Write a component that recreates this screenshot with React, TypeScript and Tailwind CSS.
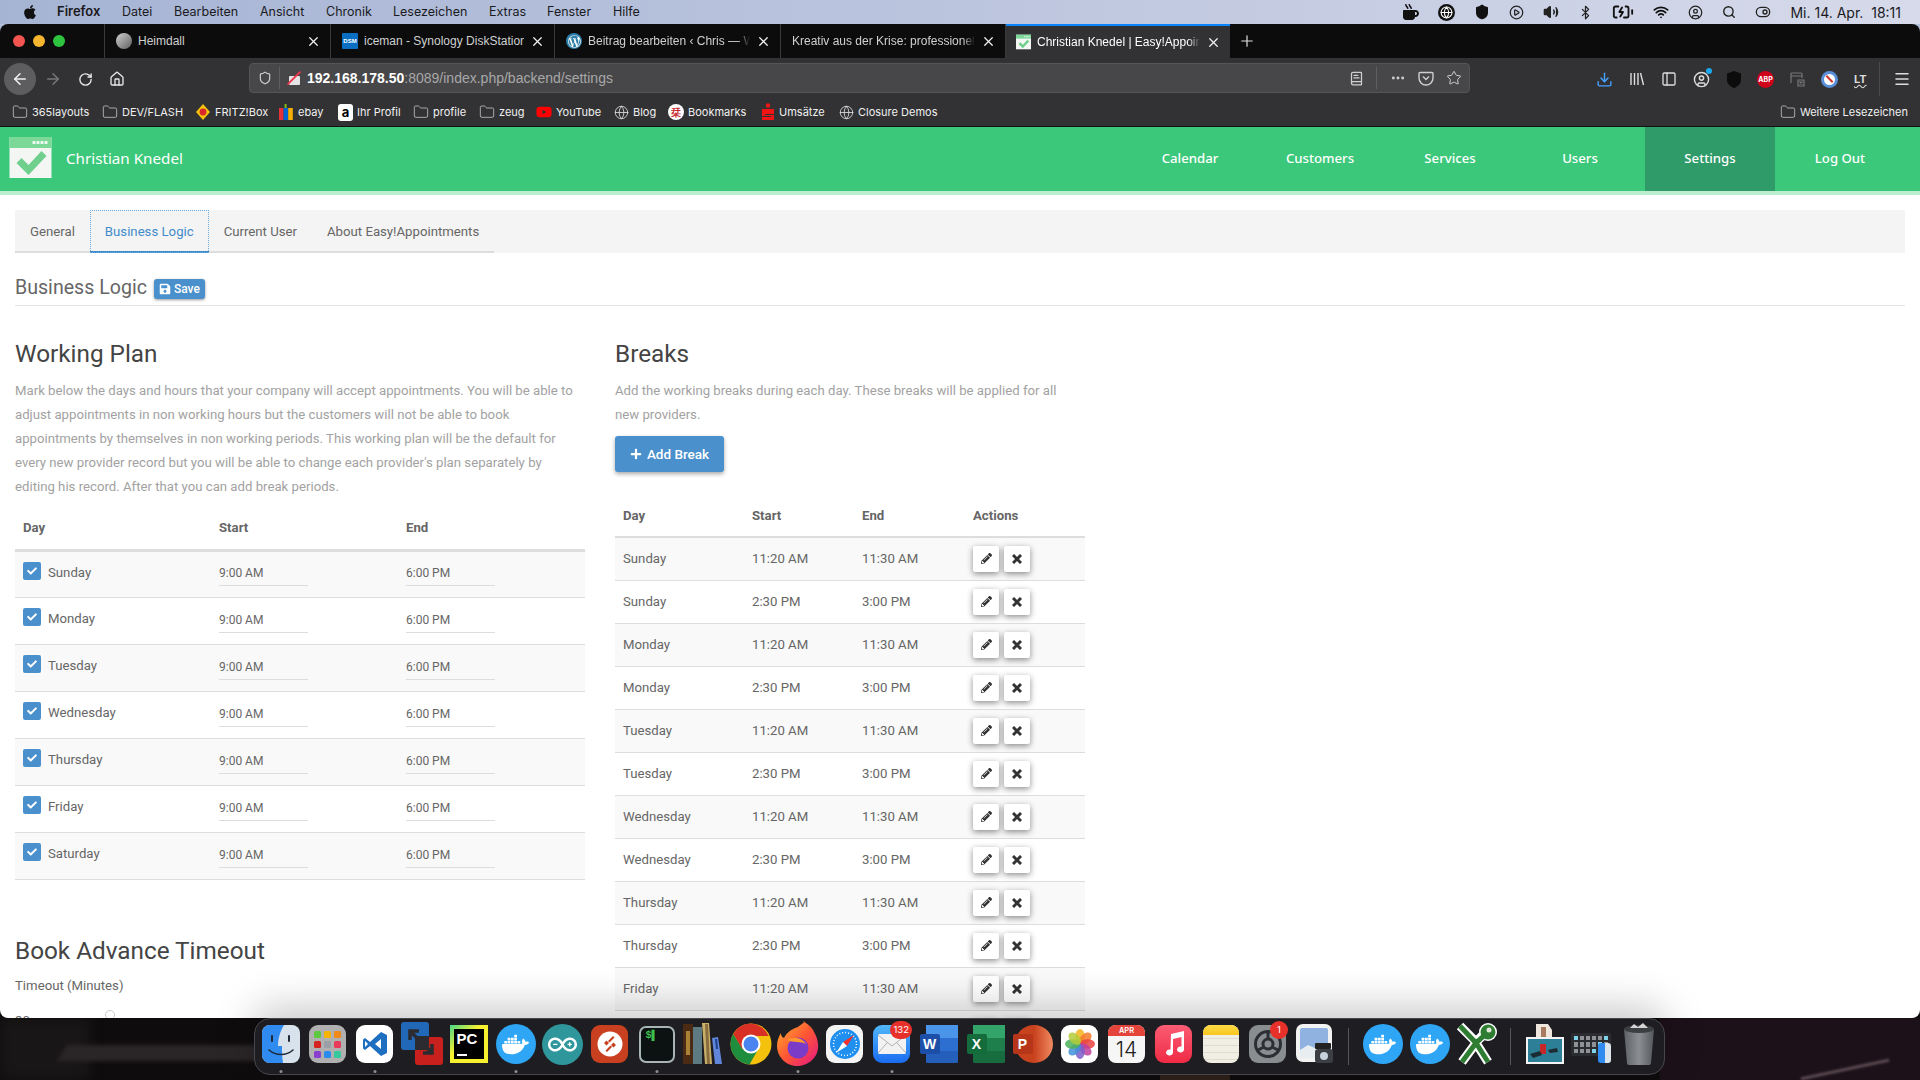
import type { ReactNode } from "react"
import {
  ArrowLeft,
  ArrowRight,
  BatteryCharging,
  Bluetooth,
  BookText,
  CircleUser,
  Download,
  Ellipsis,
  Folder,
  Globe,
  Home,
  Menu,
  PanelLeft,
  PlayCircle,
  Plus,
  RotateCw,
  Search,
  Shield,
  Star,
  ToggleRight,
  Volume2,
  Wifi,
  X,
} from "lucide-react"
import { FaApple, FaCheck, FaMugHot, FaPencilAlt, FaPlus, FaSave, FaWordpressSimple, FaYoutube } from "react-icons/fa"
import { SiArduino, SiDocker } from "react-icons/si"

const days = ["Sunday", "Monday", "Tuesday", "Wednesday", "Thursday", "Friday", "Saturday"]

const breaks = [
  ["Sunday", "11:20 AM", "11:30 AM"],
  ["Sunday", "2:30 PM", "3:00 PM"],
  ["Monday", "11:20 AM", "11:30 AM"],
  ["Monday", "2:30 PM", "3:00 PM"],
  ["Tuesday", "11:20 AM", "11:30 AM"],
  ["Tuesday", "2:30 PM", "3:00 PM"],
  ["Wednesday", "11:20 AM", "11:30 AM"],
  ["Wednesday", "2:30 PM", "3:00 PM"],
  ["Thursday", "11:20 AM", "11:30 AM"],
  ["Thursday", "2:30 PM", "3:00 PM"],
  ["Friday", "11:20 AM", "11:30 AM"],
  ["Friday", "2:30 PM", "3:00 PM"],
]

const menuItems = [
  { label: "Datei", cls: "w-[52px]" },
  { label: "Bearbeiten", cls: "w-[86px]" },
  { label: "Ansicht", cls: "w-[66px]" },
  { label: "Chronik", cls: "w-[67px]" },
  { label: "Lesezeichen", cls: "w-[96px]" },
  { label: "Extras", cls: "w-[58px]" },
  { label: "Fenster", cls: "w-[66px]" },
  { label: "Hilfe", cls: "w-[40px]" },
]

function FolderIcon() {
  return <Folder size={16} strokeWidth={1} className="shrink-0 text-[#e4e4e4]" />
}

function GlobeIcon() {
  return <Globe size={15} strokeWidth={1.3} className="shrink-0 text-[#e4e4e4]" />
}

const bookmarks: { label: string; cls: string; icon: ReactNode }[] = [
  { label: "365layouts", cls: "w-[90px]", icon: <FolderIcon /> },
  { label: "DEV/FLASH", cls: "w-[93px]", icon: <FolderIcon /> },
  {
    label: "FRITZ!Box",
    cls: "w-[83px]",
    icon: (
      <svg width="16" height="16" viewBox="0 0 16 16" className="shrink-0">
        <path d="M8 0l7 8-7 8-7-8z" fill="#f4c20d" />
        <circle cx="8" cy="8" r="3.4" fill="#d8262c" />
      </svg>
    ),
  },
  {
    label: "ebay",
    cls: "w-[60px]",
    icon: (
      <svg width="16" height="16" viewBox="0 0 16 16" className="shrink-0">
        <rect x="1" y="4" width="4.6" height="12" fill="#e53238" />
        <rect x="5.6" y="4" width="4.6" height="12" fill="#0064d2" />
        <rect x="10.2" y="4" width="4.6" height="12" fill="#f5af02" />
        <rect x="6.6" y="0" width="2" height="4" fill="#86b817" />
      </svg>
    ),
  },
  {
    label: "Ihr Profil",
    cls: "w-[75px]",
    icon: (
      <span className="flex h-[17px] w-[15px] shrink-0 items-center justify-center rounded-[3px] bg-white text-[13px] font-bold leading-none text-black">
        a
      </span>
    ),
  },
  { label: "profile", cls: "w-[66px]", icon: <FolderIcon /> },
  { label: "zeug", cls: "w-[57px]", icon: <FolderIcon /> },
  { label: "YouTube", cls: "w-[78px]", icon: <FaYoutube size={16} className="shrink-0 text-[#f00]" /> },
  { label: "Blog", cls: "w-[54px]", icon: <GlobeIcon /> },
  {
    label: "Bookmarks",
    cls: "w-[93px]",
    icon: (
      <span className="flex h-4 w-4 shrink-0 items-center justify-center rounded-full bg-white text-[10px] font-bold leading-none text-[#c8262c]">
        栞
      </span>
    ),
  },
  {
    label: "Umsätze",
    cls: "w-[78px]",
    icon: (
      <svg width="14" height="18" viewBox="0 0 14 18" className="shrink-0">
        <circle cx="7" cy="2.5" r="2.2" fill="#f01414" />
        <path d="M1 6h12v5H4v1h9v5H1v-3h9v-1H1z" fill="#f01414" />
      </svg>
    ),
  },
  { label: "Closure Demos", cls: "w-[110px]", icon: <GlobeIcon /> },
]

const browserTabs: { title: string; cls: string; fade: string; icon: ReactNode }[] = [
  {
    title: "Heimdall",
    cls: "w-[226px]",
    fade: "",
    icon: <span className="h-4 w-4 shrink-0 rounded-full bg-[linear-gradient(135deg,#cfcfcf,#5f5f5f)]" />,
  },
  {
    title: "iceman - Synology DiskStation",
    cls: "w-[224px] gap-[5px]",
    fade: "",
    icon: (
      <span className="flex h-4 w-4 shrink-0 items-center justify-center rounded-[1px] bg-[#0a6fc2] text-[6px] font-bold leading-none text-white">
        DSM
      </span>
    ),
  },
  {
    title: "Beitrag bearbeiten ‹ Chris — WordPress",
    cls: "w-[226px]",
    fade: "[mask-image:linear-gradient(90deg,#000_calc(100%-12px),transparent)]",
    icon: (
      <span className="flex h-4 w-4 shrink-0 items-center justify-center rounded-full bg-[#2c7ea8] text-white">
        <FaWordpressSimple size={13} />
      </span>
    ),
  },
  {
    title: "Kreativ aus der Krise: professionelle Hilfe",
    cls: "w-[225px]",
    fade: "[mask-image:linear-gradient(90deg,#000_calc(100%-12px),transparent)]",
    icon: null,
  },
]

function Tab({ title, cls, fade, icon }: { title: string; cls: string; fade: string; icon: ReactNode }) {
  return (
    <div className={`flex h-full items-center gap-[6px] border-r border-[#3a3a3c] pl-[11px] pr-[9px] ${cls}`}>
      {icon}
      <span className={`min-w-0 flex-1 overflow-hidden whitespace-nowrap text-[12px] text-[#d0d0d0] ${fade}`}>{title}</span>
      <X size={15} strokeWidth={2} className="shrink-0 text-[#f0f0f0]" />
    </div>
  )
}

function MenuBar() {
  return (
    <div className="flex h-6 shrink-0 items-center bg-[linear-gradient(90deg,#a6b4d4,#bcc5de_50%,#d6daea)] pl-[22px] pr-[19px] font-['Inter',sans-serif] text-[12.5px] text-[#1a1a1e]">
      <FaApple size={16} className="mr-[19px] text-[#111]" />
      <span className="w-[65px] text-[13px] font-semibold">Firefox</span>
      {menuItems.map((m) => (
        <span key={m.label} className={m.cls}>
          {m.label}
        </span>
      ))}
      <div className="ml-auto flex items-center gap-[19px]">
        <FaMugHot size={16} className="text-[#111]" />
        <span className="flex h-[17px] w-[17px] items-center justify-center rounded-full bg-[#111]">
          <Globe size={13} className="text-white" />
        </span>
        <Shield size={16} fill="#111" className="text-[#111]" />
        <PlayCircle size={15} className="text-[#222]" />
        <Volume2 size={16} fill="#222" className="text-[#222]" />
        <Bluetooth size={15} className="text-[#222]" />
        <BatteryCharging size={22} className="text-[#111]" />
        <Wifi size={16} strokeWidth={2.6} className="text-[#111]" />
        <CircleUser size={15} className="text-[#222]" />
        <Search size={14} strokeWidth={2.4} className="text-[#222]" />
        <ToggleRight size={16} className="text-[#222]" />
        <span className="whitespace-nowrap text-[14px]">Mi. 14. Apr.&nbsp; 18:11</span>
      </div>
    </div>
  )
}

function TabStrip() {
  return (
    <div className="flex h-[34px] shrink-0 items-stretch bg-[#0c0c0d] font-['Liberation_Sans',sans-serif]">
      <div className="flex w-[105px] shrink-0 items-center gap-[8px] border-r border-[#3a3a3c] pl-[13px]">
        <span className="h-3 w-3 rounded-full bg-[#f2544f]" />
        <span className="h-3 w-3 rounded-full bg-[#f5b52e]" />
        <span className="h-3 w-3 rounded-full bg-[#2ec440]" />
      </div>
      {browserTabs.map((t) => (
        <Tab key={t.title} {...t} />
      ))}
      <div className="flex h-full w-[224px] items-center gap-[6px] border-t-2 border-[#0a84ff] bg-[#323234] pl-[10px] pr-[9px]">
        <LogoMark cls="h-4 w-[15px] shrink-0" />
        <span className="min-w-0 flex-1 overflow-hidden whitespace-nowrap text-[12px] text-white [mask-image:linear-gradient(90deg,#000_calc(100%-12px),transparent)]">
          Christian Knedel | Easy!Appointments
        </span>
        <X size={15} strokeWidth={2} className="shrink-0 text-[#f0f0f0]" />
      </div>
      <div className="flex w-[34px] items-center justify-center">
        <Plus size={18} strokeWidth={1.6} className="text-[#e0e0e0]" />
      </div>
    </div>
  )
}

function UrlBar() {
  return (
    <div className="-mt-[2px] ml-[124px] flex h-[30px] w-[1221px] shrink-0 items-center rounded-[4px] border border-[#555557] bg-[#474749] text-[#cfcfcf]">
      <Shield size={14} className="ml-[8px] shrink-0" />
      <span className="ml-[7px] h-[22px] w-px bg-[#5f5f61]" />
      <span className="relative ml-[7px] flex h-[16px] w-[14px] shrink-0 items-center justify-center">
        <span className="mt-[4px] h-[9px] w-[11px] rounded-[1px] bg-[#e4e4e4]" />
        <span className="absolute left-[6px] top-[-1px] h-[18px] w-[2px] rotate-45 bg-[#f0364a]" />
      </span>
      <span className="ml-[6px] whitespace-nowrap font-['Liberation_Sans',sans-serif] text-[14px] font-bold text-white">
        192.168.178.50<span className="font-normal text-[#a8a8a8]">:8089/index.php/backend/settings</span>
      </span>
      <BookText size={15} className="ml-auto shrink-0" />
      <span className="ml-[12px] h-[22px] w-px bg-[#5f5f61]" />
      <Ellipsis size={16} strokeWidth={2.4} className="ml-[13px] shrink-0" />
      <svg width="16" height="16" viewBox="0 0 16 16" className="ml-[12px] shrink-0" fill="none" stroke="currentColor" strokeWidth="1.4">
        <path d="M2 2.5h12a1 1 0 011 1V8a7 7 0 01-14 0V3.5a1 1 0 011-1z" />
        <path d="M5 6.5l3 3 3-3" />
      </svg>
      <Star size={16} strokeWidth={1.5} className="ml-[12px] mr-[7px] shrink-0" />
    </div>
  )
}

function Toolbar() {
  return (
    <div className="flex h-[42px] shrink-0 items-center bg-[#323234] pl-[4px] font-['Inter',sans-serif]">
      <span className="flex h-8 w-8 shrink-0 items-center justify-center rounded-full bg-[#5d5d5f]">
        <ArrowLeft size={18} className="text-[#f0f0f0]" />
      </span>
      <ArrowRight size={18} className="ml-[8px] shrink-0 text-[#77777a]" />
      <RotateCw size={15} strokeWidth={2.2} className="ml-[16px] shrink-0 text-[#e8e8e8]" />
      <Home size={16} className="ml-[16px] shrink-0 text-[#e8e8e8]" />
      <UrlBar />
      <div className="ml-[126px] flex shrink-0 items-center text-[#dcdcdc]">
        <Download size={17} className="text-[#45a1ff]" />
        <svg width="16" height="16" viewBox="0 0 16 16" className="ml-[16px]" fill="none" stroke="currentColor" strokeWidth="1.4">
          <path d="M2 2v12M5.5 2v12M9 2v12M11.5 2l3 12" />
        </svg>
        <PanelLeft size={16} className="ml-[16px]" />
        <span className="relative ml-[16px]">
          <CircleUser size={17} />
          <span className="absolute right-[-2px] top-[-3px] h-[6px] w-[6px] rounded-full bg-[#1aa7ec]" />
        </span>
        <svg width="14" height="17" viewBox="0 0 14 17" className="ml-[17px]">
          <path d="M7 0l7 2.5V9c0 4-3.5 6.500-7 8-3.500-1.500-7-4-7-8V2.500z" fill="#0c0c0c" />
        </svg>
        <span className="ml-[16px] flex h-[17px] w-[17px] items-center justify-center rounded-full bg-[#d0021b] text-[7px] font-bold leading-none text-white">
          ABP
        </span>
        <svg width="15" height="15" viewBox="0 0 15 15" className="ml-[16px]" fill="none" stroke="#77777a" strokeWidth="1.2">
          <path d="M1 11V2a1 1 0 011-1h9a1 1 0 011 1v4M1 4h11" />
          <path d="M8 8h6v6H8zM9.500 9.500l3 3M12.500 9.500l-3 3" />
        </svg>
        <span className="ml-[16px] flex h-[17px] w-[17px] items-center justify-center rounded-full border-[3px] border-[#5a8fd8] bg-white">
          <span className="h-[2px] w-[9px] rotate-45 bg-[#d0342c]" />
        </span>
        <span className="ml-[16px] text-[11px] font-bold leading-none underline decoration-wavy">LT</span>
        <span className="ml-[12px] h-[34px] w-px bg-[#4a4a4c]" />
        <Menu size={18} className="ml-[13px]" />
      </div>
    </div>
  )
}

function Bookmarks() {
  return (
    <div className="flex h-[27px] shrink-0 items-center border-b border-[#111] bg-[#323234] pb-[2px] pl-[12px] pr-[12px] font-['Inter',sans-serif] text-[11px] text-[#f0f0f0]">
      {bookmarks.map((b) => (
        <span key={b.label} className={`flex items-center gap-[4px] whitespace-nowrap ${b.cls}`}>
          {b.icon}
          {b.label}
        </span>
      ))}
      <span className="ml-auto flex items-center gap-[4px] whitespace-nowrap">
        <FolderIcon />
        Weitere Lesezeichen
      </span>
    </div>
  )
}

function LogoMark({ cls }: { cls: string }) {
  return (
    <svg viewBox="0 0 42 41" className={cls}>
      <rect width="42" height="41" fill="#f4f6f4" />
      <rect width="42" height="11" fill="#7bd897" />
      <rect x="23" y="4" width="3" height="3" fill="#e9f8ee" />
      <rect x="27" y="4" width="3" height="3" fill="#e9f8ee" />
      <rect x="31" y="4" width="3" height="3" fill="#e9f8ee" />
      <rect x="35" y="4" width="3" height="3" fill="#e9f8ee" />
      <path d="M7 26l5-5 7 7 13-14 5 5-18 19z" fill="#6fd08d" />
    </svg>
  )
}

function AppHeader() {
  const items = ["Calendar", "Customers", "Services", "Users", "Settings", "Log Out"]
  return (
    <div className="flex h-[68px] shrink-0 items-stretch border-b-4 border-[#b9efd0] bg-[#3bc87a] pl-[9px] pr-[15px]">
      <div className="flex items-center pb-[3px]">
        <LogoMark cls="h-[41px] w-[43px]" />
        <span className="ml-[14px] mt-[2px] text-[15.2px] text-white">Christian Knedel</span>
      </div>
      <div className="ml-auto flex">
        {items.map((item) => (
          <span
            key={item}
            className={`flex w-[130px] items-center justify-center pb-[1px] text-[13.2px] font-medium text-white ${
              item === "Settings" ? "bg-[#2f9b69]" : ""
            }`}
          >
            {item}
          </span>
        ))}
      </div>
    </div>
  )
}

function SettingsTabs() {
  return (
    <div className="flex h-[43px] bg-[#f4f4f4] text-[13.2px] text-[#666]">
      <div className="flex border-b-2 border-[#ddd]">
        <span className="flex items-center px-[15px] pt-[2px]">General</span>
        <span className="-mb-[2px] flex items-center border-b-2 border-[#428bca] px-[15px] pt-[2px] text-[#428bca] outline-1 -outline-offset-1 outline-dotted outline-[#6aa9dc]">
          Business Logic
        </span>
        <span className="flex items-center px-[15px] pt-[2px]">Current User</span>
        <span className="flex items-center px-[15px] pt-[2px]">About Easy!Appointments</span>
      </div>
    </div>
  )
}

function TimeCell({ value }: { value: string }) {
  return (
    <td className="px-2 pb-[3px] align-middle">
      <div className="flex h-[27px] w-[89px] items-center border-b border-[#ddd] pt-[2px] text-[12px]">{value}</div>
    </td>
  )
}

function WorkingPlanTable() {
  return (
    <table className="w-[570px] table-fixed border-collapse text-[13.2px] text-[#666]">
      <colgroup>
        <col className="w-[196px]" />
        <col className="w-[187px]" />
        <col className="w-[187px]" />
      </colgroup>
      <thead>
        <tr className="h-[43px] border-b-[3px] border-[#ddd] text-left">
          <th className="px-2 pt-[1px] font-bold">Day</th>
          <th className="px-2 pt-[1px] font-bold">Start</th>
          <th className="px-2 pt-[1px] font-bold">End</th>
        </tr>
      </thead>
      <tbody>
        {days.map((d, i) => (
          <tr key={d} className={`h-[47px] border-b border-[#ddd] ${i % 2 === 0 ? "bg-[#f9f9f9]" : "bg-white"}`}>
            <td className="px-2 align-middle">
              <div className="flex items-center gap-[7px]">
                <span className="-mt-[6px] flex h-[18px] w-[18px] items-center justify-center rounded-[2px] bg-[#4a90cc]">
                  <FaCheck size={10} className="text-white" />
                </span>
                <span className="-mt-[3px]">{d}</span>
              </div>
            </td>
            <TimeCell value="9:00 AM" />
            <TimeCell value="6:00 PM" />
          </tr>
        ))}
      </tbody>
    </table>
  )
}

function IconButton({ children }: { children: ReactNode }) {
  return (
    <span className="flex h-[26px] w-[26px] items-center justify-center rounded-[2px] bg-white text-[#333] shadow-[0_2px_6px_rgba(0,0,0,0.45)]">
      {children}
    </span>
  )
}

function BreaksTable() {
  return (
    <table className="w-[470px] table-fixed border-collapse text-[13.2px] text-[#666]">
      <colgroup>
        <col className="w-[129px]" />
        <col className="w-[110px]" />
        <col className="w-[111px]" />
        <col className="w-[120px]" />
      </colgroup>
      <thead>
        <tr className="h-[42px] border-b-[2px] border-[#ddd] text-left">
          <th className="px-2 font-bold">Day</th>
          <th className="px-2 font-bold">Start</th>
          <th className="px-2 font-bold">End</th>
          <th className="px-2 font-bold">Actions</th>
        </tr>
      </thead>
      <tbody>
        {breaks.map(([day, start, end], i) => (
          <tr key={`${day}-${start}`} className={`h-[43px] border-b border-[#ddd] ${i % 2 === 0 ? "bg-[#f9f9f9]" : "bg-white"}`}>
            <td className="px-2">{day}</td>
            <td className="px-2">{start}</td>
            <td className="px-2">{end}</td>
            <td className="px-2">
              <div className="flex gap-[5px]">
                <IconButton>
                  <FaPencilAlt size={11} />
                </IconButton>
                <IconButton>
                  <svg width="10" height="10" viewBox="0 0 10 10" stroke="#333" strokeWidth="3">
                    <path d="M1 1l8 8M9 1l-8 8" />
                  </svg>
                </IconButton>
              </div>
            </td>
          </tr>
        ))}
      </tbody>
    </table>
  )
}

function PageContent() {
  return (
    <div className="min-h-0 flex-1 overflow-hidden bg-white px-[15px] pt-[15px] font-['Roboto',sans-serif] text-[#666]">
      <SettingsTabs />
      <div className="mt-[21px] flex h-[31px] items-start gap-[7px] pb-[4px]">
        <span className="self-center text-[19.6px] leading-none">Business Logic</span>
        <span className="mt-[5px] flex h-[20px] w-[51px] items-center justify-center gap-[3px] rounded-[3px] bg-[#4a90cc] text-[12px] font-medium text-white shadow-[0_1px_3px_rgba(0,0,0,0.4)]">
          <FaSave size={12} />
          Save
        </span>
      </div>
      <div className="h-px bg-[#e5e5e5]" />
      <div className="mt-[33px] flex gap-[30px]">
        <div className="w-[570px] shrink-0">
          <h2 className="text-[24.3px] leading-[30px] text-[#444]">Working Plan</h2>
          <p className="mt-[10px] w-[560px] text-[13.2px] leading-[24px] text-[#a2a2a2]">
            Mark below the days and hours that your company will accept appointments. You will be able to adjust appointments in non
            working hours but the customers will not be able to book appointments by themselves in non working periods. This working plan
            will be the default for every new provider record but you will be able to change each provider's plan separately by editing
            his record. After that you can add break periods.
          </p>
          <div className="mt-[8px]">
            <WorkingPlanTable />
          </div>
          <h2 className="mt-[56px] text-[24.3px] leading-[30px] text-[#444]">Book Advance Timeout</h2>
          <div className="mt-[10px] text-[13.2px] leading-[20px]">Timeout (Minutes)</div>
          <div className="mt-[15px] flex items-start text-[13.2px] leading-[20px]">
            <span className="w-[90px]">30</span>
            <span className="mt-[-1px] h-[10px] w-[10px] rounded-full border border-[#ccc]" />
          </div>
        </div>
        <div className="w-[470px] shrink-0">
          <h2 className="text-[24.3px] leading-[30px] text-[#444]">Breaks</h2>
          <p className="mt-[10px] w-[455px] text-[13.2px] leading-[24px] text-[#a2a2a2]">
            Add the working breaks during each day. These breaks will be applied for all new providers.
          </p>
          <div className="mt-[9px] flex h-[36px] w-[109px] items-center justify-center gap-[5px] rounded-[3px] bg-[#4a90cc] text-[13.5px] font-medium text-white shadow-[0_2px_4px_rgba(0,0,0,0.35)]">
            <FaPlus size={12} />
            Add Break
          </div>
          <div className="mt-[23px]">
            <BreaksTable />
          </div>
        </div>
      </div>
    </div>
  )
}

function Squircle({ cls, children }: { cls: string; children?: ReactNode }) {
  return <div className={`flex h-[38px] w-[37px] items-center justify-center overflow-hidden rounded-[9px] ${cls}`}>{children}</div>
}

function Badge({ value }: { value: string }) {
  return (
    <span className="absolute right-[-2px] top-[-4px] flex h-[18px] min-w-[18px] items-center justify-center rounded-full bg-[#e8302a] px-[3px] font-['Inter',sans-serif] text-[9.5px] leading-none text-white">
      {value}
    </span>
  )
}

function DockerIcon() {
  return (
    <div className="flex h-[40px] w-[40px] items-center justify-center rounded-full bg-[#2ea5f5]">
      <SiDocker size={27} className="text-white" />
    </div>
  )
}

function Finder() {
  return (
    <svg width="38" height="38" viewBox="0 0 38 38">
      <rect width="38" height="38" rx="8" fill="#d8e2ec" />
      <path d="M8 0h14c-4 7-6 13-6 21h4c0 6 0 11 1 17H8a8 8 0 01-8-8V8a8 8 0 018-8z" fill="#2f8bf0" />
      <path d="M10 11v5M27 11v5" stroke="#1d2a3a" strokeWidth="2" strokeLinecap="round" />
      <path d="M7 25c7 6 17 6 24 0" stroke="#1d2a3a" strokeWidth="1.6" fill="none" strokeLinecap="round" />
    </svg>
  )
}

function Launchpad() {
  const colors = ["#5cc93f", "#f8b400", "#f08a1d", "#d3221f", "#9aa0a6", "#ea3a5b", "#8b3fd0", "#2a8cf0", "#35c99b"]
  return (
    <Squircle cls="bg-[#b0b0b0]">
      <div className="grid grid-cols-3 gap-[3px]">
        {colors.map((c) => (
          <svg key={c} width="7" height="7" viewBox="0 0 7 7">
            <rect width="7" height="7" rx="1.500" fill={c} />
          </svg>
        ))}
      </div>
    </Squircle>
  )
}

function VsCode() {
  return (
    <Squircle cls="bg-white">
      <svg width="28" height="28" viewBox="0 0 28 28">
        <path d="M20 2l6 3v18l-6 3-11-10-5 4-2-1.500V9.500L4 8l5 4z" fill="#1f6fc0" />
        <path d="M20 9l-6 5 6 5z" fill="#fff" />
        <path d="M4 11l3 3-3 3z" fill="#fff" />
      </svg>
    </Squircle>
  )
}

function Parallels() {
  return (
    <svg width="42" height="44" viewBox="0 0 42 44">
      <rect x="14" y="15" width="28" height="28" rx="3" fill="#c8201c" />
      <rect x="0" y="0" width="28" height="28" rx="3" fill="#2168b8" />
      <path d="M14 14h14v14H14z" fill="#2b2b30" />
      <path d="M9 9l22 22M31 22v9h-9M9 18V9h9" stroke="#2b2b30" strokeWidth="3.500" fill="none" />
    </svg>
  )
}

function PyCharm() {
  return (
    <div className="flex h-[38px] w-[38px] items-center justify-center bg-[#f7f02f] p-[4px] [background-image:linear-gradient(135deg,#47d88a,#f7f02f_40%)]">
      <div className="flex h-full w-full flex-col bg-black px-[3px] pt-[2px] font-['Liberation_Sans',sans-serif] text-[15px] font-bold leading-none text-white">
        PC
        <span className="mt-auto mb-[3px] h-[2px] w-[10px] bg-white" />
      </div>
    </div>
  )
}

function ArduinoIcon() {
  return (
    <div className="flex h-[41px] w-[41px] items-center justify-center rounded-full bg-[#2f979c]">
      <SiArduino size={29} className="text-white" />
    </div>
  )
}

function AnyDesk() {
  return (
    <Squircle cls="bg-[#c8401f]">
      <svg width="26" height="26" viewBox="0 0 26 26">
        <circle cx="13" cy="13" r="12.500" fill="#fff" />
        <path d="M16 5l-5 5 1.500 1.500 5-5zM10 21l5-5-1.500-1.500-5 5zM7 12l2.500-2.500L12 12l-2.500 2.500zM14 14l2.500-2.500L19 14l-2.500 2.500z" fill="#c8401f" />
      </svg>
    </Squircle>
  )
}

function Terminal() {
  return (
    <div className="h-[37px] w-[36px] rounded-[7px] border-2 border-[#a9b4b4] bg-[#0c1212] pl-[5px] pt-[3px] font-['Liberation_Mono',monospace] text-[10px] font-bold leading-none text-[#3fbf4f]">
      $▌
    </div>
  )
}

function Calibre() {
  return (
    <svg width="42" height="42" viewBox="0 0 42 42">
      <rect x="0" y="1" width="10" height="40" fill="#4a2a12" />
      <rect x="3" y="8" width="4" height="24" fill="#a98238" />
      <rect x="10" y="4" width="9" height="37" fill="#5d7a82" />
      <path d="M19 0l7 0 3 41-7 0z" fill="#c9b06a" />
      <path d="M22 1l3 0 2 40-3 0z" fill="#4a2a12" opacity="0.5" />
      <path d="M29 15l6-1 4 27-7 0z" fill="#5f86d8" />
      <path d="M32 16l2 0 1 10-2 0z" fill="#1f3f90" />
    </svg>
  )
}

function Chrome() {
  return (
    <svg width="42" height="42" viewBox="0 0 42 42">
      <circle cx="21" cy="21" r="20.500" fill="#f4c20d" />
      <path d="M21 .5A20.500 20.500 0 003.200 11l9 15.600L21 13h17.800A20.500 20.500 0 0021 .5z" fill="#d93025" />
      <path d="M3.200 11A20.500 20.500 0 0019.500 41.400l9-15.600L12.200 26z" fill="#1e8e3e" />
      <circle cx="21" cy="21" r="9.500" fill="#fff" />
      <circle cx="21" cy="21" r="7.500" fill="#4a84f0" />
    </svg>
  )
}

function Firefox() {
  return (
    <svg width="42" height="46" viewBox="0 0 42 46">
      <defs>
        <linearGradient id="ffbody" x1="0" y1="0" x2="1" y2="1">
          <stop offset="0" stopColor="#ffb52e" />
          <stop offset="0.5" stopColor="#ff5634" />
          <stop offset="1" stopColor="#e31587" />
        </linearGradient>
      </defs>
      <path d="M21 6c4-3 9-6 5-6 6 4 9 6 11 11 5 8 6 19 0 26-8 10-24 11-32 1C-2 30-1 20 4 12c0 3 1 4 3 5 3-6 8-9 14-11z" fill="url(#ffbody)" />
      <circle cx="21" cy="27" r="10.500" fill="#7b3bc9" />
      <path d="M10 19c6-3 15-3 19 4-5-3-12-1-19-4z" fill="#ff9a2e" />
    </svg>
  )
}

function Safari() {
  return (
    <Squircle cls="bg-[#f4f4f4]">
      <svg width="32" height="32" viewBox="0 0 32 32">
        <circle cx="16" cy="16" r="15" fill="#1f8ff0" />
        <circle cx="16" cy="16" r="11.500" fill="none" stroke="#fff" strokeWidth="1.500" strokeDasharray="1 2" />
        <path d="M25 7L14 14l4 4z" fill="#f3322c" />
        <path d="M7 25l7-11 4 4z" fill="#fff" />
      </svg>
    </Squircle>
  )
}

function Mail() {
  return (
    <div className="relative">
      <Squircle cls="bg-[linear-gradient(180deg,#50b8fa,#1a6cf0)]">
        <svg width="28" height="20" viewBox="0 0 28 20">
          <rect width="28" height="20" rx="1.500" fill="#f2f2f2" />
          <path d="M0 1l14 11L28 1M0 19l9-10M28 19L19 9" stroke="#b0b0b0" strokeWidth="1" fill="none" />
        </svg>
      </Squircle>
      <Badge value="132" />
    </div>
  )
}

function Office({ letter, dark, mid, light }: { letter: string; dark: string; mid: string; light: string }) {
  return (
    <div className="relative h-[38px] w-[38px]">
      <svg width="32" height="38" viewBox="0 0 32 38" className="absolute right-0 top-0">
        <rect width="32" height="38" rx="2" fill={mid} />
        <rect width="32" height="13" fill={light} />
        <rect y="26" width="32" height="12" fill={dark} opacity="0.5" />
      </svg>
      <span className={`absolute left-0 top-[9px] flex h-[20px] w-[20px] items-center justify-center rounded-[2px] font-['Liberation_Sans',sans-serif] text-[14px] font-bold leading-none text-white ${
        letter === "W" ? "bg-[#1e4fa8]" : "bg-[#146c3c]"
      }`}>
        {letter}
      </span>
    </div>
  )
}

function PowerPoint() {
  return (
    <div className="relative h-[38px] w-[40px]">
      <div className="absolute right-0 top-0 h-[38px] w-[38px] rounded-full bg-[linear-gradient(90deg,#c8421e_50%,#f08a60)]" />
      <span className="absolute left-0 top-[9px] flex h-[20px] w-[20px] items-center justify-center rounded-[2px] bg-[#b7361a] font-['Liberation_Sans',sans-serif] text-[14px] font-bold leading-none text-white">
        P
      </span>
    </div>
  )
}

function Photos() {
  const petals = ["#f6b31c", "#f4792a", "#e9423f", "#c23f9c", "#7a5dc9", "#3f8fd8", "#4db25a", "#b4cd3a"]
  return (
    <Squircle cls="bg-white">
      <svg width="32" height="32" viewBox="0 0 32 32">
        {petals.map((c, i) => (
          <ellipse key={c} cx="16" cy="8.500" rx="4.800" ry="7.500" fill={c} opacity="0.85" transform={`rotate(${i * 45} 16 16)`} />
        ))}
      </svg>
    </Squircle>
  )
}

function CalendarIcon() {
  return (
    <div className="flex h-[38px] w-[37px] flex-col overflow-hidden rounded-[8px] bg-[#f6f6f6] font-['Inter',sans-serif]">
      <div className="flex h-[11px] items-center justify-center bg-[#e5443a] text-[7.5px] font-semibold leading-none text-white">APR</div>
      <div className="flex flex-1 items-center justify-center text-[21px] font-light leading-none text-[#222]">14</div>
    </div>
  )
}

function Music() {
  return (
    <Squircle cls="bg-[linear-gradient(180deg,#fb5c74,#f02a44)]">
      <svg width="22" height="26" viewBox="0 0 22 26">
        <path d="M8 3l13-3v18.500a3.500 3 0 11-2.500-2.900V6L10 8v13.500A3.500 3 0 117.500 18.600z" fill="#fff" />
      </svg>
    </Squircle>
  )
}

function Notes() {
  return (
    <div className="flex h-[38px] w-[36px] flex-col overflow-hidden rounded-[8px] bg-[repeating-linear-gradient(180deg,#f1eee3_0,#f1eee3_6px,#dedbd0_6px,#dedbd0_7px)]">
      <div className="h-[10px] bg-[linear-gradient(180deg,#ffdc48,#f7c51e)]" />
    </div>
  )
}

function SystemPrefs() {
  return (
    <div className="relative">
      <Squircle cls="bg-[#8a8d90]">
        <svg width="30" height="30" viewBox="0 0 30 30" fill="none" stroke="#2c2f33" strokeWidth="3">
          <circle cx="15" cy="15" r="12.500" />
          <circle cx="15" cy="15" r="5" />
          <path d="M15 3v7M5 21l6-3M25 21l-6-3" />
        </svg>
      </Squircle>
      <Badge value="1" />
    </div>
  )
}

function Preview() {
  return (
    <svg width="38" height="40" viewBox="0 0 38 40">
      <rect width="36" height="38" rx="7" fill="#f2f2f2" />
      <rect x="4" y="4" width="28" height="30" rx="2" fill="#8fb2e0" />
      <path d="M4 26l8-5 9 4 11-3v12H4z" fill="#e8edf2" />
      <rect x="19" y="19" width="16" height="6" rx="1" fill="#222" />
      <rect x="19" y="25" width="18" height="14" rx="3" fill="#3b3f44" />
      <circle cx="28" cy="32" r="4" fill="#c8d2da" />
    </svg>
  )
}

function KeePass() {
  return (
    <svg width="42" height="44" viewBox="0 0 42 44">
      <path d="M4 4l16 16L33 8M6 40l14-19 12 19M20 20l10-10" stroke="#fff" strokeWidth="9" fill="none" />
      <circle cx="32" cy="10" r="9" fill="#fff" />
      <path d="M4 4l16 17L33 9M6 40l14-19 12 19" stroke="#2e7d32" strokeWidth="5" fill="none" />
      <circle cx="32" cy="10" r="7.500" fill="#2e7d32" />
      <circle cx="33" cy="8" r="2.500" fill="#dfe8d8" />
    </svg>
  )
}

function StackPhoto() {
  return (
    <svg width="38" height="40" viewBox="0 0 38 40">
      <path d="M10 0h12l4 6v8H10z" fill="#efe6de" />
      <rect x="15" y="3" width="5" height="10" fill="#a87a60" />
      <rect y="13" width="38" height="27" fill="#f4f4f4" />
      <rect x="2" y="15" width="34" height="23" fill="#2c7f97" />
      <rect x="14" y="20" width="6" height="10" fill="#c62828" />
      <path d="M4 30l10-3 2 4-9 3zM22 26l9-2 1 4-8 1z" fill="#1c2c33" />
    </svg>
  )
}

function StackGrid() {
  return (
    <div className="relative h-[40px] w-[42px]">
      <div className="mt-[9px] grid h-[23px] w-[40px] grid-cols-6 gap-[2px] rounded-[2px] bg-[#2a2c30] p-[3px]">
        {Array.from({ length: 18 }, (_, i) => (
          <span key={i} className={i % 5 === 0 ? "bg-[#7fd3e8]" : "bg-[#8e9296]"} />
        ))}
      </div>
      <div className="absolute bottom-[1px] right-[2px] h-[20px] w-[13px] rounded-[3px] bg-[linear-gradient(90deg,#2f8bf0_50%,#dce4ec_50%)]" />
    </div>
  )
}

function Trash() {
  return (
    <svg width="32" height="42" viewBox="0 0 32 42">
      <defs>
        <linearGradient id="trashbody" x1="0" y1="0" x2="1" y2="0">
          <stop offset="0" stopColor="#5e6266" />
          <stop offset="0.5" stopColor="#8b8f93" />
          <stop offset="1" stopColor="#54585c" />
        </linearGradient>
      </defs>
      <path d="M1 6h30l-3 34a2 2 0 01-2 2H6a2 2 0 01-2-2z" fill="url(#trashbody)" />
      <ellipse cx="16" cy="6" rx="15" ry="4" fill="#3c3f42" />
      <path d="M7 5l4-4 4 3 5-4 5 5z" fill="#d4d4d4" />
    </svg>
  )
}

const dockGroups: { key: string; node: ReactNode; dot?: boolean }[][] = [
  [
    { key: "finder", node: <Finder />, dot: true },
    { key: "launchpad", node: <Launchpad /> },
    { key: "vscode", node: <VsCode />, dot: true },
    { key: "parallels", node: <Parallels /> },
    { key: "pycharm", node: <PyCharm /> },
    { key: "docker", node: <DockerIcon />, dot: true },
    { key: "arduino", node: <ArduinoIcon /> },
    { key: "anydesk", node: <AnyDesk /> },
    { key: "terminal", node: <Terminal />, dot: true },
    { key: "calibre", node: <Calibre /> },
    { key: "chrome", node: <Chrome /> },
    { key: "firefox", node: <Firefox />, dot: true },
    { key: "safari", node: <Safari /> },
    { key: "mail", node: <Mail />, dot: true },
    { key: "word", node: <Office letter="W" dark="#1e4fa8" mid="#2d6fd0" light="#4a94ea" /> },
    { key: "excel", node: <Office letter="X" dark="#125c33" mid="#1f7f4c" light="#33a56a" /> },
    { key: "powerpoint", node: <PowerPoint /> },
    { key: "photos", node: <Photos /> },
    { key: "calendar", node: <CalendarIcon /> },
    { key: "music", node: <Music /> },
    { key: "notes", node: <Notes /> },
    { key: "prefs", node: <SystemPrefs /> },
    { key: "preview", node: <Preview /> },
  ],
  [
    { key: "docker2", node: <DockerIcon /> },
    { key: "docker3", node: <DockerIcon /> },
    { key: "keepass", node: <KeePass /> },
  ],
  [
    { key: "stack1", node: <StackPhoto /> },
    { key: "stack2", node: <StackGrid /> },
    { key: "trash", node: <Trash /> },
  ],
]

function Dock() {
  return (
    <div className="absolute left-[254px] top-[1018px] flex h-[57px] w-[1411px] items-stretch rounded-[16px] border border-[#47474b] bg-[#1e1e22] pl-[2px] shadow-[0_-10px_40px_rgba(0,0,0,0.22)]">
      {dockGroups.map((group, gi) => (
        <div key={group[0].key} className="flex items-stretch">
          {gi > 0 && <span className="mx-[10px] my-[9px] w-px bg-[#55555a]" />}
          {group.map((item) => (
            <div key={item.key} className="relative flex w-[47px] items-center justify-center pb-[5px]">
              {item.node}
              {item.dot && <span className="absolute bottom-[1px] left-1/2 h-[3px] w-[3px] -translate-x-1/2 rounded-full bg-[#8e8e92]" />}
            </div>
          ))}
        </div>
      ))}
    </div>
  )
}

// the dark desktop photo that shows below the window
function Wallpaper() {
  return (
    <>
      <div className="absolute bottom-0 left-0 h-[62px] w-[90px] bg-[#191617] blur-[6px]" />
      <div className="absolute left-[62px] top-[1045px] h-[16px] w-[200px] -skew-x-[30deg] bg-[#2a2527] blur-[2px]" />
      <div className="absolute bottom-0 right-0 h-[62px] w-[260px] bg-[#1d1119]" />
      <div className="absolute right-[30px] top-[1068px] h-[3px] w-[90px] -rotate-12 bg-[#5a4a50] blur-[1px]" />
      <div className="absolute bottom-0 left-[1160px] h-[5px] w-[70px] bg-[#2e2019]" />
    </>
  )
}

export default function App() {
  return (
    <div className="relative h-[1080px] w-[1920px] overflow-hidden bg-[linear-gradient(180deg,#b4bfda_0,#b4bfda_60px,#0f0c0d_60px)]">
      <Wallpaper />
      <div className="relative">
        <MenuBar />
        <div className="flex h-[994px] flex-col overflow-hidden rounded-[8px]">
          <TabStrip />
          <Toolbar />
          <Bookmarks />
          <AppHeader />
          <PageContent />
        </div>
      </div>
      <Dock />
    </div>
  )
}
